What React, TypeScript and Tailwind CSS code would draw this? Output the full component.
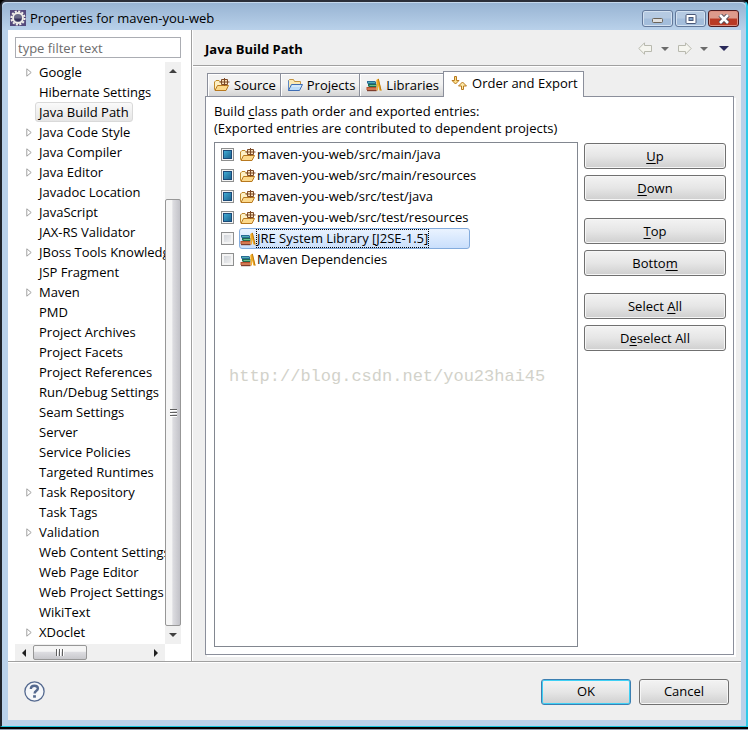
import { type ReactNode } from 'react'

type TreeItem = { label: string; expandable?: boolean; selected?: boolean }
type Entry = { label: string; kind: 'source' | 'library'; checked?: boolean; selected?: boolean }

const TREE: TreeItem[] = [
  { label: 'Google', expandable: true },
  { label: 'Hibernate Settings' },
  { label: 'Java Build Path', selected: true },
  { label: 'Java Code Style', expandable: true },
  { label: 'Java Compiler', expandable: true },
  { label: 'Java Editor', expandable: true },
  { label: 'Javadoc Location' },
  { label: 'JavaScript', expandable: true },
  { label: 'JAX-RS Validator' },
  { label: 'JBoss Tools Knowledge', expandable: true },
  { label: 'JSP Fragment' },
  { label: 'Maven', expandable: true },
  { label: 'PMD' },
  { label: 'Project Archives' },
  { label: 'Project Facets' },
  { label: 'Project References' },
  { label: 'Run/Debug Settings' },
  { label: 'Seam Settings' },
  { label: 'Server' },
  { label: 'Service Policies' },
  { label: 'Targeted Runtimes' },
  { label: 'Task Repository', expandable: true },
  { label: 'Task Tags' },
  { label: 'Validation', expandable: true },
  { label: 'Web Content Settings' },
  { label: 'Web Page Editor' },
  { label: 'Web Project Settings' },
  { label: 'WikiText' },
  { label: 'XDoclet', expandable: true },
]

const ENTRIES: Entry[] = [
  { label: 'maven-you-web/src/main/java', kind: 'source', checked: true },
  { label: 'maven-you-web/src/main/resources', kind: 'source', checked: true },
  { label: 'maven-you-web/src/test/java', kind: 'source', checked: true },
  { label: 'maven-you-web/src/test/resources', kind: 'source', checked: true },
  { label: 'JRE System Library [J2SE-1.5]', kind: 'library', selected: true },
  { label: 'Maven Dependencies', kind: 'library' },
]

// Each group is separated by a wider gap; `key` is the mnemonic position
const ACTIONS = [
  [{ label: 'Up', key: 0 }, { label: 'Down', key: 0 }],
  [{ label: 'Top', key: 0 }, { label: 'Bottom', key: 5 }],
  [{ label: 'Select All', key: 7 }, { label: 'Deselect All', key: 1 }],
]

export default function App() {
  return (
    <div className="flex min-h-screen flex-col bg-black font-['Open_Sans','Noto_Sans',sans-serif] text-[13px] leading-5 text-black">
      <div className="flex flex-1 flex-col rounded-t-md border-t-2 border-r-2 border-b border-l-2 border-t-[#2b2e38] border-r-[#2fc9e8] border-b-[#19c5de] border-l-[#20242c] bg-[#b9d1ea]">
        <TitleBar />
        <div className="mr-[5px] mb-[6px] ml-[6px] flex flex-1 flex-col bg-[#efefef]">
          <div className="flex flex-1">
            <Sidebar />
            <BuildPath />
          </div>
          <Footer />
        </div>
      </div>
      <div className="mt-0.5 h-px bg-[#8f9bb0]" />
    </div>
  )
}

function TitleBar() {
  return (
    <header className="flex h-7 items-start justify-between rounded-t-md border-t border-[#c5d8ec] bg-linear-to-b from-[#98b4d3] to-[#b9d1ea] pr-[7px] pl-2">
      <div className="flex items-center gap-1 pt-[6px]">
        <EclipseIcon />
        <h1 className="leading-[18px]">Properties for maven-you-web</h1>
      </div>
      <div className="flex gap-0.5 pt-[7px]">
        <CaptionButton label="Minimize">
          <svg width="12" height="6" viewBox="0 0 12 6" className="mt-1">
            <rect x="0.5" y="0.5" width="10" height="4" rx="1" fill="#e0e0e0" stroke="#6b6459" />
          </svg>
        </CaptionButton>
        <CaptionButton label="Maximize">
          <svg width="12" height="10" viewBox="0 0 12 10">
            <rect x="1" y="0.5" width="10" height="9" rx="1" fill="#fff" stroke="#4a5878" />
            <rect x="4" y="3.5" width="4" height="3" fill="#7fa3cc" stroke="#4a5878" />
          </svg>
        </CaptionButton>
        <CaptionButton label="Close" danger>
          <svg width="12" height="10" viewBox="0 0 12 10">
            <path d="M2 1l8 8M10 1L2 9" stroke="#4d4a55" strokeWidth="4.4" />
            <path d="M2 1l8 8M10 1L2 9" stroke="#fff" strokeWidth="2.6" />
          </svg>
        </CaptionButton>
      </div>
    </header>
  )
}

function CaptionButton({ label, danger, children }: { label: string; danger?: boolean; children: ReactNode }) {
  return (
    <button
      type="button"
      aria-label={label}
      className={`flex h-[17px] w-[31px] items-center justify-center rounded-[3px] border ${
        danger
          ? 'border-[#4c1b20] bg-linear-to-b from-[#dd9a8c] from-45% to-[#b93a25] to-55% shadow-[inset_0_0_0_1px_#dc8f80]'
          : 'border-[#62789a] bg-linear-to-b from-[#b5cae2] from-45% to-[#a3bddb] to-55% shadow-[inset_0_0_0_1px_#d3e1f0]'
      }`}
    >
      {children}
    </button>
  )
}

function Sidebar() {
  return (
    <aside className="flex w-[184px] shrink-0 flex-col border-r border-[#a0a0a0] bg-white pt-[7px] pl-[7px]">
      <input
        type="text"
        aria-label="Filter"
        placeholder="type filter text"
        className="mr-[10px] h-[21px] border border-[#abadb3] bg-white px-0.5 placeholder:text-[#6d6d6d] placeholder:opacity-100"
      />
      <div className="mt-1 mr-[10px] flex flex-1">
        <ul className="min-w-0 flex-1 overflow-hidden">
          {TREE.map((item) => (
            <li key={item.label} className="flex h-5 items-center whitespace-nowrap">
              <span className="flex w-5 shrink-0 justify-end pr-[3px]">
                {item.expandable && (
                  <svg width="6" height="9" viewBox="0 0 6 9">
                    <path d="M0.8 0.8L5.2 4.5L0.8 8.2z" fill="#fff" stroke="#a0a0a0" />
                  </svg>
                )}
              </span>
              <span
                className={`rounded-[3px] border px-[3px] leading-[18px] ${
                  item.selected ? 'border-[#d9d9d9] bg-linear-to-b from-[#fafafa] to-[#e6e6e6]' : 'border-transparent'
                }`}
              >
                {item.label}
              </span>
            </li>
          ))}
        </ul>
        <div className="flex w-4 flex-col bg-[#f0f0f0]">
          <span className="flex h-[17px] items-center justify-center">
            <Triangle className="rotate-180 text-[#404040]" />
          </span>
          <div className="h-[120px]" />
          <div className="flex flex-1 flex-col items-center justify-center gap-px rounded-[2px] border border-[#979797] bg-linear-to-r from-[#f5f5f5] from-40% via-[#dcdce0] via-50% to-[#c2c2c8]">
            {[0, 1, 2].map((i) => (
              <span key={i} className="h-0.5 w-[7px] border-b border-white bg-[#606060]" />
            ))}
          </div>
          <span className="flex h-[18px] items-center justify-center">
            <Triangle className="text-[#404040]" />
          </span>
        </div>
      </div>
      <div className="mr-[26px] flex h-[17px] items-center bg-[#f0f0f0]">
        <span className="flex w-[18px] justify-center">
          <Triangle className="rotate-90 text-[#202020]" />
        </span>
        <div className="flex h-[15px] w-[54px] items-center justify-center gap-px rounded-[2px] border border-[#979797] bg-linear-to-b from-[#f5f5f5] from-40% via-[#dcdce0] via-50% to-[#c8c8cc]">
          {[0, 1, 2].map((i) => (
            <span key={i} className="h-[7px] w-0.5 border-r border-white bg-[#606060]" />
          ))}
        </div>
        <span className="ml-auto flex w-[18px] justify-center">
          <Triangle className="-rotate-90 text-[#202020]" />
        </span>
      </div>
    </aside>
  )
}

function BuildPath() {
  return (
    <main className="flex min-w-0 flex-1 flex-col border-l border-white">
      <div className="flex h-9 items-center justify-between border-b border-[#a0a0a0] px-3 pt-0.5">
        <h2 className="font-bold">Java Build Path</h2>
        <div className="flex items-center">
          <button type="button" aria-label="Back" className="w-[15px]">
            <NavArrow />
          </button>
          <button type="button" aria-label="Back history" className="flex w-6 justify-center">
            <Triangle className="text-[#6b6b6b]" />
          </button>
          <button type="button" aria-label="Forward" className="w-[15px] rotate-180">
            <NavArrow />
          </button>
          <button type="button" aria-label="Forward history" className="flex w-6 justify-center">
            <Triangle className="text-[#6b6b6b]" />
          </button>
          <button type="button" aria-label="View menu" className="ml-[3px]">
            <Triangle large className="text-[#2a2a5a]" />
          </button>
        </div>
      </div>

      <div className="flex flex-1 flex-col border-t border-white pt-1 pr-[7px] pb-[6px] pl-3">
        {/* Tabs */}
        <div className="flex items-end pl-0.5" role="tablist">
          <Tab icon={<SourceIcon />} label="Source" />
          <Tab icon={<ProjectIcon />} label="Projects" />
          <Tab icon={<LibraryIcon />} label="Libraries" />
          <Tab icon={<OrderIcon />} label="Order and Export" active />
        </div>

        <div className="flex flex-1 flex-col border border-[#8b8f9b] bg-white pt-[6px] pr-[7px] pb-[7px] pl-2 shadow-[2px_2px_0_#fff]">
          <div className="leading-[17px]">
            <p>
              Build <u className="underline-offset-2">c</u>lass path order and exported entries:
            </p>
            <p>(Exported entries are contributed to dependent projects)</p>
          </div>
          <div className="mt-[5px] flex flex-1 gap-[6px]">
            <div className="flex min-w-0 flex-1 flex-col border border-[#828790] pt-px">
              <ul>
                {ENTRIES.map((entry) => (
                  <EntryRow key={entry.label} entry={entry} />
                ))}
              </ul>
              <p className="mt-[95px] pl-[14px] font-['Liberation_Mono','Noto_Sans_CJK_SC',monospace] text-[17px] leading-6 text-[#d2d2ca]">
                http://blog.csdn.net/you23hai45
              </p>
            </div>
            <div className="flex w-[142px] shrink-0 flex-col gap-[17px] pt-px">
              {ACTIONS.map((group) => (
                <div key={group[0].label} className="flex flex-col gap-[6px]">
                  {group.map(({ label, key }) => (
                    <PushButton key={label}>
                      {label.slice(0, key)}
                      <u className="underline-offset-2">{label[key]}</u>
                      {label.slice(key + 1)}
                    </PushButton>
                  ))}
                </div>
              ))}
            </div>
          </div>
        </div>
      </div>
    </main>
  )
}

function Tab({ icon, label, active }: { icon: ReactNode; label: string; active?: boolean }) {
  return (
    <button
      type="button"
      role="tab"
      aria-selected={!!active}
      className={
        active
          ? 'relative -mb-px flex h-[26px] items-center gap-[5px] border border-b-0 border-[#8b8f9b] bg-white pr-[5px] pb-[3px] pl-[7px] whitespace-nowrap'
          : 'flex h-[23px] items-center gap-1 border border-r-0 border-b-0 border-[#8b8f9b] bg-linear-to-b from-[#f3f3f3] from-45% to-[#d4d4d4] pr-1 pl-[6px] whitespace-nowrap shadow-[inset_1px_1px_0_#fff]'
      }
    >
      {icon}
      {label}
    </button>
  )
}

function EntryRow({ entry }: { entry: Entry }) {
  return (
    <li>
      <label className="flex h-[21px] items-center pl-[6px]">
        <input
          type="checkbox"
          defaultChecked={entry.checked}
          className="size-[13px] appearance-none border border-[#8e8f8f] bg-linear-to-br from-[#cbcfd5] to-[#f6f6f6] shadow-[inset_0_0_0_2px_#f4f4f4] checked:from-[#4cc0e8] checked:to-[#12527e] checked:shadow-[inset_0_0_0_1px_#f4f4f4,inset_0_0_0_2px_#1c4a78]"
        />
        <span
          className={`ml-[5px] flex h-[21px] items-center rounded-[3px] border ${
            entry.selected
              ? 'w-[231px] border-[#84acdd] bg-linear-to-b from-[#eaf3ff] to-[#c9dffc]'
              : 'border-transparent'
          }`}
        >
          {entry.kind === 'source' ? <SourceIcon /> : <LibraryIcon />}
          <span className={`border border-dotted leading-[17px] ${entry.selected ? 'border-black' : 'border-transparent'}`}>
            {entry.label}
          </span>
        </span>
      </label>
    </li>
  )
}

function PushButton({ primary, children }: { primary?: boolean; children: ReactNode }) {
  return (
    <button
      type="button"
      className={`h-[26px] rounded-[3px] border bg-linear-to-b from-[#f3f3f3] from-0% via-[#e6e6e6] via-50% to-[#cfcfcf] pb-px ${
        primary
          ? 'border-[#3c7fb1] shadow-[inset_0_0_0_1px_#3fd0f5]'
          : 'border-[#707070] shadow-[inset_0_0_0_1px_#f6f6f6]'
      }`}
    >
      {children}
    </button>
  )
}

function Footer() {
  return (
    <footer className="flex h-[59px] items-center justify-between border-t border-[#a0a0a0] pr-3 pl-4 shadow-[inset_0_1px_0_#fff]">
      <button type="button" aria-label="Help">
        <svg width="21" height="21" viewBox="0 0 21 21" fill="none" stroke="#54698f">
          <circle cx="10.5" cy="10.5" r="9.6" fill="#f5f7fa" strokeWidth="1.3" />
          <path d="M6.9 8V7.4C7 5.6 8.4 4.7 10.4 4.7C12.6 4.7 13.9 5.8 13.9 7.4C13.9 9.8 10.6 9.7 10.6 12.5" strokeWidth="2.4" />
          <path d="M10.5 14.2v2.5" strokeWidth="2.8" />
        </svg>
      </button>
      <div className="grid grid-cols-[90px_90px] gap-2 pt-px">
        <PushButton primary>OK</PushButton>
        <PushButton>Cancel</PushButton>
      </div>
    </footer>
  )
}

/* Icons */

function Triangle({ className, large }: { className?: string; large?: boolean }) {
  return (
    <svg width={large ? 10 : 8} height={large ? 5 : 4} viewBox="0 0 8 4" preserveAspectRatio="none" className={className}>
      <path d="M0 0h8L4 4z" fill="currentColor" />
    </svg>
  )
}

function NavArrow() {
  return (
    <svg width="15" height="13" viewBox="0 0 15 13">
      <path d="M0.8 6.5L6.5 0.8V3.5H13.5V9.5H6.5V12.2z" fill="#f5f5ef" stroke="#b8b9ae" />
    </svg>
  )
}

function EclipseIcon() {
  return (
    <svg width="16" height="16" viewBox="0 0 16 16">
      <rect width="16" height="16" fill="#54497c" />
      <circle cx="8" cy="8" r="6.6" fill="none" stroke="#f2f0ea" strokeWidth="2" strokeDasharray="2.1 1.35" />
      <circle cx="8" cy="8" r="5" fill="#6b6a88" stroke="#f2f0ea" strokeWidth="1.8" />
      <path d="M4.2 8.5h7.6A4 4 0 0 1 4.2 8.5z" fill="#34305a" />
    </svg>
  )
}

function SourceIcon() {
  return (
    <svg width="16" height="16" viewBox="0 0 16 16" className="shrink-0">
      <path d="M0.5 12.5V5L2 3.5H5L6.5 5H12.5V12.5L11.5 13.5H1.5z" fill="#fdf0c4" stroke="#c08a2c" />
      <path d="M1 13.5L3.5 8.5H14.5L12 13.5z" fill="#fcd98b" stroke="#b8791f" />
      <path d="M7.5 2.5h6v5h-6z" fill="#f8dfb8" stroke="#7d4a26" />
      <path d="M10.5 1v7.5M5.5 5h10" stroke="#7d4a26" />
    </svg>
  )
}

function ProjectIcon() {
  return (
    <svg width="16" height="16" viewBox="0 0 16 16" className="shrink-0">
      <path d="M1.5 13.5V3.5L2.5 2.5H6.5L7.5 4.5H13.5V8" fill="#fbe9b5" stroke="#c29340" />
      <path d="M1.5 3.5V13.5" stroke="#5b87c5" />
      <path d="M1.5 13.5L4.5 7.5H15.5L12.5 13.5z" fill="#bcdcfa" stroke="#3e6db4" />
      <path d="M5 9h9" stroke="#e9f5ff" />
    </svg>
  )
}

function LibraryIcon() {
  return (
    <svg width="16" height="16" viewBox="0 0 16 16" className="shrink-0">
      <path d="M1 4h8l1 1v2H2L1 6z" fill="#2b6c96" />
      <path d="M2 5.5h7" stroke="#4fb0b4" />
      <path d="M2 7h8.5v3H3L2 9z" fill="#1e6b50" />
      <path d="M3.5 8.5h6.5" stroke="#6fc090" />
      <path d="M0.5 10h10v3.8H1.5L0.5 12.5z" fill="#b9502c" />
      <path d="M1.5 12h9" stroke="#eda37a" />
      <path d="M1 13.7h9.5" stroke="#6e3020" />
      <path d="M10.3 3L12.4 1.5L15.6 13.5H13.4L11.9 8V13.5H10.8z" fill="#f0ab22" />
      <path d="M12.4 2L15 13.5" stroke="#bd7a12" />
    </svg>
  )
}

function OrderIcon() {
  return (
    <svg width="16" height="16" viewBox="0 0 16 16" className="shrink-0">
      <path d="M3.5 1.5H5.5V5.5H8L4.5 9L1 5.5H3.5z" fill="#fce08a" stroke="#b8791f" />
      <path d="M10.5 14.5H12.5V11H15.5L11.5 7L7.5 11H10.5z" fill="#fce9a8" stroke="#b8791f" />
    </svg>
  )
}
